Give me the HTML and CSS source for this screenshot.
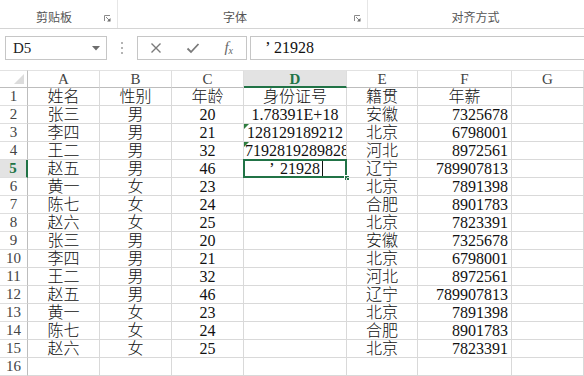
FILE: index.html
```html
<!DOCTYPE html>
<html>
<head>
<meta charset="utf-8">
<link rel="stylesheet" href="styles.css">
</head>
<body>
<div class="ribbon">
  <div class="grp g1"><span class="glabel">剪贴板</span><svg class="launch" width="7" height="7" viewBox="0 0 7 7"><path d="M0.5 6V0.5H6" fill="none" stroke="#8a8a8a"/><path d="M2 2L5.5 5.5" stroke="#8a8a8a"/><path d="M3 6.5H6.5V3Z" fill="#6a6a6a"/></svg></div>
  <div class="grp g2"><span class="glabel">字体</span><svg class="launch" width="7" height="7" viewBox="0 0 7 7"><path d="M0.5 6V0.5H6" fill="none" stroke="#8a8a8a"/><path d="M2 2L5.5 5.5" stroke="#8a8a8a"/><path d="M3 6.5H6.5V3Z" fill="#6a6a6a"/></svg></div>
  <div class="grp g3"><span class="glabel">对齐方式</span></div>
</div>
<div class="fbar">
  <div class="namebox"><span>D5</span><svg width="8" height="5" viewBox="0 0 8 5"><path d="M0 0H8L4 4.5Z" fill="#6d6d6d"/></svg></div>
  <div class="dots"><i></i><i></i><i></i></div>
  <div class="btns">
    <svg width="12" height="12" viewBox="0 0 12 12"><path d="M1.5 1.5L10.5 10.5M10.5 1.5L1.5 10.5" stroke="#7a7a7a" stroke-width="1.4"/></svg>
    <svg width="14" height="12" viewBox="0 0 14 12"><path d="M1.5 6.5L5 10L12.5 2" fill="none" stroke="#7a7a7a" stroke-width="1.8"/></svg>
    <span class="fx">f<sub>x</sub></span>
  </div>
  <div class="finput"><span class="apos">’</span>21928</div>
</div>
<div class="sheet">
  <div class="corner"><svg width="10" height="10" viewBox="0 0 10 10"><path d="M10 0V10H0Z" fill="#dcdcdc"/></svg></div>
  <div class="ch">A</div><div class="ch">B</div><div class="ch">C</div><div class="ch chs">D</div><div class="ch">E</div><div class="ch">F</div><div class="ch">G</div>

  <div class="rh">1</div><div class="c">姓名</div><div class="c">性别</div><div class="c">年龄</div><div class="c">身份证号</div><div class="c">籍贯</div><div class="c">年薪</div><div class="c"></div>
  <div class="rh">2</div><div class="c">张三</div><div class="c">男</div><div class="c">20</div><div class="c">1.78391E+18</div><div class="c">安徽</div><div class="c r">7325678</div><div class="c"></div>
  <div class="rh">3</div><div class="c">李四</div><div class="c">男</div><div class="c">21</div><div class="c tx">128129189212</div><div class="c">北京</div><div class="c r">6798001</div><div class="c"></div>
  <div class="rh">4</div><div class="c">王二</div><div class="c">男</div><div class="c">32</div><div class="c tx tx2">7192819289828</div><div class="c">河北</div><div class="c r">8972561</div><div class="c"></div>
  <div class="rh rhs">5</div><div class="c">赵五</div><div class="c">男</div><div class="c">46</div><div class="c edit"><span class="apos2">’</span>21928<i class="caret"></i><div class="sel"><b class="handle"></b></div></div><div class="c">辽宁</div><div class="c r">789907813</div><div class="c"></div>
  <div class="rh">6</div><div class="c">黄一</div><div class="c">女</div><div class="c">23</div><div class="c"></div><div class="c">北京</div><div class="c r">7891398</div><div class="c"></div>
  <div class="rh">7</div><div class="c">陈七</div><div class="c">女</div><div class="c">24</div><div class="c"></div><div class="c">合肥</div><div class="c r">8901783</div><div class="c"></div>
  <div class="rh">8</div><div class="c">赵六</div><div class="c">女</div><div class="c">25</div><div class="c"></div><div class="c">北京</div><div class="c r">7823391</div><div class="c"></div>
  <div class="rh">9</div><div class="c">张三</div><div class="c">男</div><div class="c">20</div><div class="c"></div><div class="c">安徽</div><div class="c r">7325678</div><div class="c"></div>
  <div class="rh">10</div><div class="c">李四</div><div class="c">男</div><div class="c">21</div><div class="c"></div><div class="c">北京</div><div class="c r">6798001</div><div class="c"></div>
  <div class="rh">11</div><div class="c">王二</div><div class="c">男</div><div class="c">32</div><div class="c"></div><div class="c">河北</div><div class="c r">8972561</div><div class="c"></div>
  <div class="rh">12</div><div class="c">赵五</div><div class="c">男</div><div class="c">46</div><div class="c"></div><div class="c">辽宁</div><div class="c r">789907813</div><div class="c"></div>
  <div class="rh">13</div><div class="c">黄一</div><div class="c">女</div><div class="c">23</div><div class="c"></div><div class="c">北京</div><div class="c r">7891398</div><div class="c"></div>
  <div class="rh">14</div><div class="c">陈七</div><div class="c">女</div><div class="c">24</div><div class="c"></div><div class="c">合肥</div><div class="c r">8901783</div><div class="c"></div>
  <div class="rh">15</div><div class="c">赵六</div><div class="c">女</div><div class="c">25</div><div class="c"></div><div class="c">北京</div><div class="c r">7823391</div><div class="c"></div>
  <div class="rh">16</div><div class="c"></div><div class="c"></div><div class="c"></div><div class="c"></div><div class="c"></div><div class="c"></div><div class="c"></div>
</div>
</body>
</html>
```

FILE: styles.css
```css
* { box-sizing: border-box; }
html, body { margin: 0; padding: 0; background: #fff; overflow: hidden; }
body { width: 584px; height: 376px; font-family: "Liberation Serif", "Noto Sans CJK SC", serif; color: #111; }

.ribbon { display: flex; height: 29px; border-bottom: 1px solid #d4d4d4; background: #fff; }
.grp { display: flex; align-items: center; height: 28px; padding-top: 4px; border-right: 1px solid #e6e6e6; }
.g1 { width: 118px; }
.g2 { width: 250px; }
.g3 { flex: 1; border-right: none; }
.glabel { flex: 1; text-align: center; font-family: "Noto Sans CJK SC", sans-serif; font-size: 12px; color: #555; }
.g1 .glabel { padding-left: 4px; }
.g2 .glabel { padding-right: 2px; }
.g3 .glabel { padding-right: 1px; }
.launch { margin-right: 6px; margin-top: 5px; }

.fbar { display: flex; align-items: stretch; height: 24px; margin-top: 7px; }
.namebox { width: 102px; margin-left: 5px; border: 1px solid #c6c6c6; display: flex; align-items: center; justify-content: space-between; padding: 0 6px 0 7px; font-size: 15px; color: #222; }
.dots { width: 30px; display: flex; flex-direction: column; align-items: center; justify-content: center; gap: 3px; }
.dots i { display: block; width: 2px; height: 2px; background: #b4b4b4; }
.btns { width: 110px; border: 1px solid #c6c6c6; display: flex; align-items: center; justify-content: space-between; padding: 0 13px 0 12px; }
.fx { font-family: "Liberation Serif", serif; font-style: italic; font-size: 15px; color: #666; line-height: 1; }
.fx sub { font-size: 10px; vertical-align: -2px; }
.finput { flex: 1; margin-left: 3px; margin-right: -2px; border: 1px solid #c6c6c6; display: flex; align-items: center; padding-left: 14px; font-size: 16px; color: #111; }
.apos { display: inline-block; width: 9px; font-size: 17px; }

.sheet { margin-top: 10px; display: grid; grid-template-columns: 28px 72px 72px 72px 103px 71px 94px 72px; grid-auto-rows: 18px; }
.corner { border-right: 1px solid #bdbdbd; border-bottom: 1px solid #bdbdbd; border-top: 1px solid #e2e2e2; display: flex; align-items: flex-end; justify-content: flex-end; padding: 0 3px 3px 0; }
.ch { border-top: 1px solid #e2e2e2; border-right: 1px solid #dedede; border-bottom: 1px solid #bdbdbd; text-align: center; font-size: 15px; line-height: 16px; color: #444; }
.chs { background: #e3e3e3; color: #217346; font-weight: bold; border-bottom: 2px solid #217346; }
.rh { border-right: 1px solid #bdbdbd; border-bottom: 1px solid #dedede; text-align: center; font-size: 15px; line-height: 17px; color: #444; }
.rhs { background: #e3e3e3; color: #217346; font-weight: bold; border-right: 2px solid #217346; }
.c { position: relative; border-right: 1px solid #d9d9d9; border-bottom: 1px solid #d9d9d9; text-align: center; font-size: 16px; font-weight: 300; line-height: 17px; white-space: nowrap; overflow: hidden; color: #111; }
.c.r { text-align: right; padding-right: 3px; }
.c.tx { text-align: left; padding-left: 3px; }
.c.tx2 { padding-left: 1px; }
.c.tx::before { content: ""; position: absolute; left: 0; top: 0; border-top: 5px solid #2f7d3f; border-right: 5px solid transparent; }
.c.edit { overflow: visible; text-align: left; padding-left: 25px; }
.apos2 { display: inline-block; width: 11px; font-size: 17px; }
.caret { display: inline-block; width: 1px; height: 15px; background: #111; vertical-align: -2px; margin-left: 2px; }
.sel { position: absolute; left: -1px; top: -1px; right: -1px; bottom: -1px; border: 2px solid #217346; }
.handle { position: absolute; right: -5px; bottom: -5px; width: 6px; height: 6px; background: #217346; border: 1px solid #fff; }
```
